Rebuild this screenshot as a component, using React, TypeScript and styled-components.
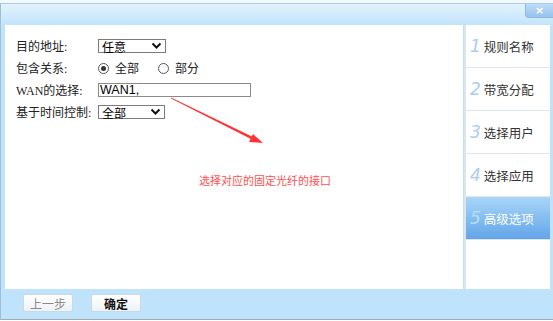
import { FunctionComponent } from "react";
import styled, { createGlobalStyle } from "styled-components";

const GlobalStyle = createGlobalStyle`
  html, body {
    margin: 0;
    padding: 0;
    background: #fff;
  }
  body {
    width: 553px;
    height: 321px;
    overflow: hidden;
    font-family: "Liberation Serif", "Noto Sans CJK SC", serif;
  }
`;

const TopStrip = styled.div`
  height: 3px;
  background: #f4f8fb;
`;

const Dialog = styled.div`
  background: #bfe3fb;
  border-top: 1px solid #a6cdea;
  border-left: 1px solid #9fbfd6;
  border-bottom: 1px solid #a3acb4;
`;

const Header = styled.div`
  height: 21px;
  display: flex;
  justify-content: flex-end;
  align-items: flex-start;
  background: linear-gradient(#e3f2fd, #c2e4fb);
`;

const CloseButton = styled.div`
  width: 27px;
  height: 13px;
  display: flex;
  align-items: center;
  justify-content: center;
  background: linear-gradient(#bcdcf7, #97c3ef);
  border: 1px solid #8fb8e0;
  border-top: none;
  border-right: none;
  border-radius: 0 0 0 4px;
  color: #fff;
  font-family: "DejaVu Sans", sans-serif;
  font-weight: bold;
  font-size: 11px;
  line-height: 1;
`;

const Body = styled.div`
  height: 264px;
  display: flex;
  padding: 0 3px 0 4px;
`;

const Main = styled.div`
  position: relative;
  flex: 1;
  background: #fff;
  padding: 10px 0 0 11px;
`;

const Form = styled.div`
  display: grid;
  grid-template-columns: 82px auto;
  grid-auto-rows: 22px;
  align-items: center;
  justify-content: start;
`;

const Label = styled.div`
  font-size: 12px;
  color: #222;
  white-space: nowrap;
`;

const Field = styled.div`
  display: flex;
  align-items: center;
`;

const SelectBox = styled.div<{ $width: number }>`
  box-sizing: border-box;
  width: ${(p) => p.$width}px;
  height: 14px;
  display: flex;
  align-items: center;
  justify-content: space-between;
  padding: 0 3px 0 3px;
  border: 1px solid #7b7b7b;
  background: #fff;
  font-family: "Liberation Sans", "Noto Sans CJK SC", sans-serif;
  font-size: 12px;
  color: #000;
`;

const TextInput = styled.div`
  box-sizing: border-box;
  width: 153px;
  height: 14px;
  display: flex;
  align-items: center;
  padding: 0 1px;
  border: 1px solid #8a8a8a;
  font-family: "Liberation Sans", sans-serif;
  font-size: 12.5px;
  color: #000;
`;

const RadioOption = styled.label`
  display: flex;
  align-items: center;
  gap: 6px;
  margin-right: 19px;
  font-size: 12px;
  color: #222;
`;

const RadioDot = styled.span<{ $checked?: boolean }>`
  box-sizing: border-box;
  width: 11px;
  height: 11px;
  border-radius: 50%;
  border: 1px solid #555;
  display: flex;
  align-items: center;
  justify-content: center;
  &::after {
    content: "";
    width: 5px;
    height: 5px;
    border-radius: 50%;
    background: ${(p) => (p.$checked ? "#333" : "transparent")};
  }
`;

const Arrow = styled.svg`
  position: absolute;
  left: 0;
  top: 0;
  pointer-events: none;
`;

const Note = styled.div`
  position: absolute;
  left: 194px;
  top: 147px;
  font-family: "Noto Sans CJK SC", sans-serif;
  font-size: 11px;
  color: #ff4f4f;
  letter-spacing: 0;
`;

const Sidebar = styled.div`
  flex: 0 0 84px;
  background: #fff;
  border-left: 2px solid #dde5eb;
  margin-left: 1px;
  display: flex;
  flex-direction: column;
`;

const Step = styled.div<{ $active?: boolean }>`
  height: 42px;
  display: flex;
  align-items: center;
  gap: 3px;
  padding-left: 4px;
  border-bottom: 1px solid #dde6ee;
  background: ${(p) =>
    p.$active ? "linear-gradient(#a9d6f8, #62a5e9)" : "#fff"};
  color: ${(p) => (p.$active ? "#fff" : "#333")};
  font-size: 12.5px;
`;

const StepNo = styled.span<{ $active?: boolean }>`
  font-family: "DejaVu Sans", sans-serif;
  font-style: italic;
  font-size: 17px;
  color: ${(p) => (p.$active ? "#b9dcf6" : "#a9cdf2")};
`;

const Footer = styled.div`
  height: 30px;
  display: flex;
  align-items: flex-start;
  gap: 18px;
  padding: 5px 0 0 22px;
  box-sizing: border-box;
`;

const Button = styled.div<{ $disabled?: boolean }>`
  width: 50px;
  height: 18px;
  box-sizing: border-box;
  display: flex;
  align-items: center;
  justify-content: center;
  border: 1px solid #c9d9e6;
  border-radius: 2px;
  background: linear-gradient(#ffffff, #eef2f5);
  font-family: "Noto Sans CJK SC", sans-serif;
  font-size: 12px;
  color: ${(p) => (p.$disabled ? "#8a8a8a" : "#111")};
  font-weight: ${(p) => (p.$disabled ? "normal" : "bold")};
`;

const Chevron: FunctionComponent = () => (
  <svg width="11" height="8" viewBox="0 0 11 8">
    <path d="M1.5 1.5 L5.5 5.5 L9.5 1.5" fill="none" stroke="#111" strokeWidth="2" />
  </svg>
);

const steps = ["规则名称", "带宽分配", "选择用户", "选择应用", "高级选项"];

const App: FunctionComponent = () => (
  <>
    <GlobalStyle />
    <TopStrip />
    <Dialog>
      <Header>
        <CloseButton>×</CloseButton>
      </Header>
      <Body>
        <Main>
          <Form>
            <Label>目的地址:</Label>
            <Field>
              <SelectBox $width={68}>
                任意
                <Chevron />
              </SelectBox>
            </Field>
            <Label>包含关系:</Label>
            <Field>
              <RadioOption>
                <RadioDot $checked />
                全部
              </RadioOption>
              <RadioOption>
                <RadioDot />
                部分
              </RadioOption>
            </Field>
            <Label>WAN的选择:</Label>
            <Field>
              <TextInput>WAN1,</TextInput>
            </Field>
            <Label>基于时间控制:</Label>
            <Field>
              <SelectBox $width={67}>
                全部
                <Chevron />
              </SelectBox>
            </Field>
          </Form>
          <Arrow width="300" height="150" viewBox="0 0 300 150">
            <polygon points="166,72.5 248,112 247,114.5 166,73.5" fill="#f33" />
            <polygon points="258,118 244,117 248,109" fill="#f33" />
          </Arrow>
          <Note>选择对应的固定光纤的接口</Note>
        </Main>
        <Sidebar>
          {steps.map((s, i) => (
            <Step key={s} $active={i === 4}>
              <StepNo $active={i === 4}>{i + 1}</StepNo>
              {s}
            </Step>
          ))}
        </Sidebar>
      </Body>
      <Footer>
        <Button $disabled>上一步</Button>
        <Button>确定</Button>
      </Footer>
    </Dialog>
  </>
);

export default App;
